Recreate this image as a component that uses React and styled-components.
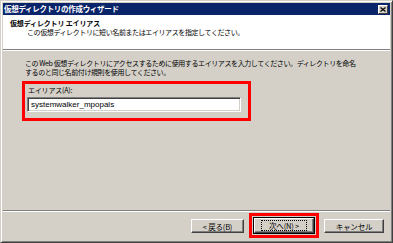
import React from "react";
import styled, { createGlobalStyle } from "styled-components";

const GlobalStyle = createGlobalStyle`
  html, body { margin: 0; padding: 0; background: #d4d0c8; }
  body {
    width: 393px; height: 243px; overflow: hidden;
    font-family: "Noto Sans CJK JP", "Noto Sans", sans-serif;
    color: #000;
  }
`;

const Window = styled.div`
  box-sizing: border-box;
  width: 393px;
  height: 243px;
  background: #d4d0c8;
  border-style: solid;
  border-width: 1px;
  border-color: #d4d0c8 #404040 #404040 #d4d0c8;
  box-shadow: inset 1px 1px 0 #ffffff, inset -1px -1px 0 #808080;
  padding: 2px;
  display: flex;
  flex-direction: column;
`;

const TitleBar = styled.div`
  height: 12px;
  background: #0a246a;
  color: #fff;
  display: flex;
  align-items: center;
  justify-content: space-between;
  padding: 0 2px 0 1px;
  flex-shrink: 0;
`;

const TitleText = styled.span`
  font-size: 7.5px;
  font-weight: bold;
  letter-spacing: -0.3px;
  line-height: 12px;
  white-space: nowrap;
`;

const CloseButton = styled.div`
  box-sizing: border-box;
  width: 10px;
  height: 9px;
  background: #d4d0c8;
  border: 1px solid;
  border-color: #ffffff #404040 #404040 #ffffff;
  display: flex;
  align-items: center;
  justify-content: center;
`;

const Header = styled.div`
  height: 35px;
  background: #ffffff;
  border-bottom: 1px solid #808080;
  box-shadow: 0 1px 0 #ffffff;
  padding: 4px 0 0 7px;
  box-sizing: border-box;
  flex-shrink: 0;
`;

const HeaderTitle = styled.div`
  font-size: 7px;
  font-weight: bold;
  letter-spacing: -0.15px;
  line-height: 9px;
  white-space: nowrap;
`;

const HeaderSub = styled.div`
  font-size: 7px;
  letter-spacing: -0.4px;
  line-height: 9px;
  padding-left: 17px;
  white-space: nowrap;
`;

const Body = styled.div`
  flex: 1;
  padding: 9px 0 0 19px;
  display: flex;
  flex-direction: column;
`;

const Description = styled.div`
  margin-left: 3px;
  font-size: 7px;
  letter-spacing: -0.4px;
  line-height: 9px;
  white-space: nowrap;
`;

const Highlight = styled.div`
  box-sizing: border-box;
  width: 229px;
  height: 40px;
  margin-top: 4px;
  border: 3px solid #ff0000;
  padding: 2px 0 0 2px;
  display: flex;
  flex-direction: column;
`;

const Label = styled.div`
  font-size: 7px;
  letter-spacing: -0.2px;
  line-height: 9px;
  padding-left: 1px;
  white-space: nowrap;
`;

const TextInput = styled.div`
  box-sizing: border-box;
  width: 214px;
  height: 15px;
  margin-top: 2px;
  background: #ffffff;
  border: 1px solid;
  border-color: #808080 #ffffff #ffffff #808080;
  box-shadow: inset 1px 1px 0 #404040, inset -1px -1px 0 #d4d0c8;
  font-family: "Liberation Sans", Arial, sans-serif;
  font-size: 8px;
  line-height: 13px;
  padding-left: 3px;
  white-space: nowrap;
`;

const Footer = styled.div`
  height: 30px;
  border-top: 1px solid #808080;
  box-shadow: inset 0 1px 0 #ffffff;
  box-sizing: border-box;
  padding: 1px 6px 0 0;
  display: flex;
  justify-content: flex-end;
  align-items: center;
  gap: 5px;
  flex-shrink: 0;
`;

const Button = styled.div`
  box-sizing: border-box;
  width: ${(p) => p.$w || 60}px;
  height: 14px;
  background: #d4d0c8;
  border: 1px solid;
  border-color: #ffffff #404040 #404040 #ffffff;
  box-shadow: inset -1px -1px 0 #808080;
  font-size: 7.5px;
  letter-spacing: -0.2px;
  display: flex;
  align-items: center;
  justify-content: center;
  white-space: nowrap;
`;

const DefaultButton = styled(Button)`
  height: 15px;
  outline: 1px solid #000;
  outline-offset: 0;
`;

const FocusRing = styled.span`
  border: 1px dotted #000;
  padding: 0 7px;
  line-height: 9px;
`;

const RedWrap = styled.div`
  box-sizing: border-box;
  width: 70px;
  height: 25px;
  border: 3px solid #ff0000;
  display: flex;
  align-items: center;
  justify-content: center;
  margin-top: -2px;
`;

export default function App() {
  return (
    <>
      <GlobalStyle />
      <Window>
        <TitleBar>
          <TitleText>仮想ディレクトリの作成ウィザード</TitleText>
          <CloseButton>
            <svg width="6" height="5" viewBox="0 0 6 5">
              <path d="M0.5 0.5 L5.5 4.5 M5.5 0.5 L0.5 4.5" stroke="#000" strokeWidth="1.2" />
            </svg>
          </CloseButton>
        </TitleBar>
        <Header>
          <HeaderTitle>仮想ディレクトリ エイリアス</HeaderTitle>
          <HeaderSub>この仮想ディレクトリに短い名前またはエイリアスを指定してください。</HeaderSub>
        </Header>
        <Body>
          <Description>
            この Web 仮想ディレクトリにアクセスするために使用するエイリアスを入力してください。ディレクトリを命名
            <br />
            するのと同じ名前付け規則を使用してください。
          </Description>
          <Highlight>
            <Label>エイリアス(A):</Label>
            <TextInput>systemwalker_mpopals</TextInput>
          </Highlight>
        </Body>
        <Footer>
          <Button $w={53}>&lt; 戻る(B)</Button>
          <RedWrap>
            <DefaultButton $w={60}>
              <FocusRing>次へ(N) &gt;</FocusRing>
            </DefaultButton>
          </RedWrap>
          <Button $w={60}>キャンセル</Button>
        </Footer>
      </Window>
    </>
  );
}
